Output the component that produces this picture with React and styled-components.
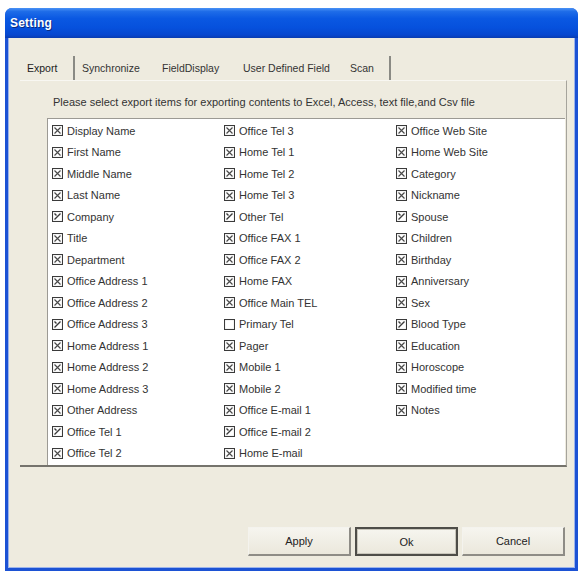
import React from "react";
import styled, { createGlobalStyle } from "styled-components";

const GlobalStyle = createGlobalStyle`
  html, body { margin: 0; padding: 0; background: #ffffff; }
  body { font-family: "Liberation Sans", Arial, sans-serif; }
`;

const Window = styled.div`
  margin: 8px 3px 2px 5px;
  width: 573px;
  height: 563px;
  display: flex;
  flex-direction: column;
  border-radius: 7px 7px 0 0;
  overflow: hidden;
  background: #1c52d4;
`;

const TitleBar = styled.div`
  height: 30px;
  flex: none;
  display: flex;
  align-items: center;
  padding-left: 5px;
  background: linear-gradient(
    to bottom,
    #4a92f5 0%,
    #1e6ce8 12%,
    #0a58e2 35%,
    #0651dd 65%,
    #0747cf 90%,
    #0a3cb0 100%
  );
`;

const Title = styled.span`
  color: #ffffff;
  font-weight: bold;
  font-size: 12px;
  letter-spacing: 0.2px;
  text-shadow: 1px 1px 0 #0a2a80;
`;

const Body = styled.div`
  flex: 1;
  margin: 0 3px 3px 3px;
  background: #eeebdf;
  box-shadow: inset 1px 0 0 #9db4ea, inset -1px 0 0 #9db4ea, inset 0 -1px 0 #9db4ea;
  padding: 18px 10px 12px 12px;
  display: flex;
  flex-direction: column;
`;

const TabStrip = styled.div`
  display: flex;
  height: 24px;
  align-items: stretch;
`;

const Tab = styled.div`
  width: ${(p) => p.$w}px;
  box-sizing: border-box;
  padding-left: 7px;
  display: flex;
  align-items: center;
  font-size: 10.5px;
  color: ${(p) => (p.$active ? "#222" : "#333")};
  border-right: ${(p) => (p.$edge ? "2px solid #8a8a84" : "none")};
  white-space: nowrap;
`;

const Panel = styled.div`
  width: 547px;
  height: 387px;
  box-sizing: border-box;
  border-right: 1px solid #a6a49c;
  border-bottom: 2px solid #75736c;
  border-top: 1px solid #f8f7f2;
  padding: 15px 1px 0 27px;
  display: flex;
  flex-direction: column;
`;

const Caption = styled.div`
  font-size: 11px;
  color: #333;
  margin-left: 6px;
  height: 22px;
  line-height: 13px;
  white-space: nowrap;
`;

const ListBox = styled.div`
  flex: 1;
  background: #ffffff;
  border-left: 1px solid #9c9a94;
  border-top: 1px solid #9c9a94;
  padding: 1px 0 0 4px;
  display: grid;
  grid-template-rows: repeat(16, 21.5px);
  grid-template-columns: repeat(3, 172px);
  grid-auto-flow: column;
  align-content: start;
`;

const Item = styled.label`
  display: flex;
  align-items: center;
  gap: 4px;
  font-size: 11px;
  color: #333;
  white-space: nowrap;
`;

const Buttons = styled.div`
  margin-top: 60px;
  display: flex;
  justify-content: flex-end;
  gap: 4px;
`;

const Button = styled.div`
  width: 103px;
  height: 29px;
  box-sizing: border-box;
  display: flex;
  align-items: center;
  justify-content: center;
  font-size: 11px;
  color: #222;
  background: linear-gradient(to bottom, #f6f5ef, #ebe8dc);
  border-top: 1px solid #f4f3ee;
  border-left: 1px solid #f4f3ee;
  border-right: 2px solid ${(p) => (p.$default ? "#4e4d48" : "#8e8c86")};
  border-bottom: 2px solid ${(p) => (p.$default ? "#4e4d48" : "#8e8c86")};
  ${(p) =>
    p.$default &&
    `
    border: 2px solid #4e4d48;
    box-shadow: inset 0 0 0 1px #c9c6bb;
  `}
`;

function CheckBox({ kind }) {
  return (
    <svg width="11" height="11" viewBox="0 0 11 11" style={{ flex: "none" }}>
      <rect x="0.5" y="0.5" width="10" height="10" fill="#fff" stroke="#3a3a3a" strokeWidth="1.1" />
      {kind === "x" && (
        <path d="M2.5 2.5 L8.5 8.5 M8.5 2.5 L2.5 8.5" stroke="#4a4a4a" strokeWidth="1.2" />
      )}
      {kind === "slash" && (
        <path d="M2.5 8.5 L8.5 2.5 M2.5 2.5 L4.5 4.5" stroke="#3a3a3a" strokeWidth="1.4" />
      )}
    </svg>
  );
}

const items = [
  ["Display Name", "x"],
  ["First Name", "x"],
  ["Middle Name", "x"],
  ["Last Name", "x"],
  ["Company", "slash"],
  ["Title", "x"],
  ["Department", "x"],
  ["Office Address 1", "x"],
  ["Office Address 2", "x"],
  ["Office Address 3", "slash"],
  ["Home Address 1", "x"],
  ["Home Address 2", "x"],
  ["Home Address 3", "x"],
  ["Other Address", "x"],
  ["Office Tel 1", "slash"],
  ["Office Tel 2", "x"],
  ["Office Tel 3", "x"],
  ["Home Tel 1", "x"],
  ["Home Tel 2", "x"],
  ["Home Tel 3", "x"],
  ["Other Tel", "slash"],
  ["Office FAX 1", "x"],
  ["Office FAX 2", "x"],
  ["Home FAX", "x"],
  ["Office Main TEL", "x"],
  ["Primary Tel", "none"],
  ["Pager", "x"],
  ["Mobile 1", "x"],
  ["Mobile 2", "x"],
  ["Office E-mail 1", "x"],
  ["Office E-mail 2", "slash"],
  ["Home E-mail", "x"],
  ["Office Web Site", "x"],
  ["Home Web Site", "x"],
  ["Category", "x"],
  ["Nickname", "x"],
  ["Spouse", "slash"],
  ["Children", "x"],
  ["Birthday", "x"],
  ["Anniversary", "x"],
  ["Sex", "x"],
  ["Blood Type", "slash"],
  ["Education", "x"],
  ["Horoscope", "x"],
  ["Modified time", "x"],
  ["Notes", "x"],
];

const tabs = [
  { label: "Export", w: 55, active: true, edge: true },
  { label: "Synchronize", w: 80 },
  { label: "FieldDisplay", w: 81 },
  { label: "User Defined Field", w: 107 },
  { label: "Scan", w: 48, edge: true },
];

export default function App() {
  return (
    <>
      <GlobalStyle />
      <Window>
        <TitleBar>
          <Title>Setting</Title>
        </TitleBar>
        <Body>
          <TabStrip>
            {tabs.map((t) => (
              <Tab key={t.label} $w={t.w} $active={t.active} $edge={t.edge}>
                {t.label}
              </Tab>
            ))}
          </TabStrip>
          <Panel>
            <Caption>
              Please select export items for exporting contents to Excel, Access, text file,and Csv file
            </Caption>
            <ListBox>
              {items.map(([label, kind]) => (
                <Item key={label}>
                  <CheckBox kind={kind} />
                  {label}
                </Item>
              ))}
            </ListBox>
          </Panel>
          <Buttons>
            <Button>Apply</Button>
            <Button $default>Ok</Button>
            <Button>Cancel</Button>
          </Buttons>
        </Body>
      </Window>
    </>
  );
}
